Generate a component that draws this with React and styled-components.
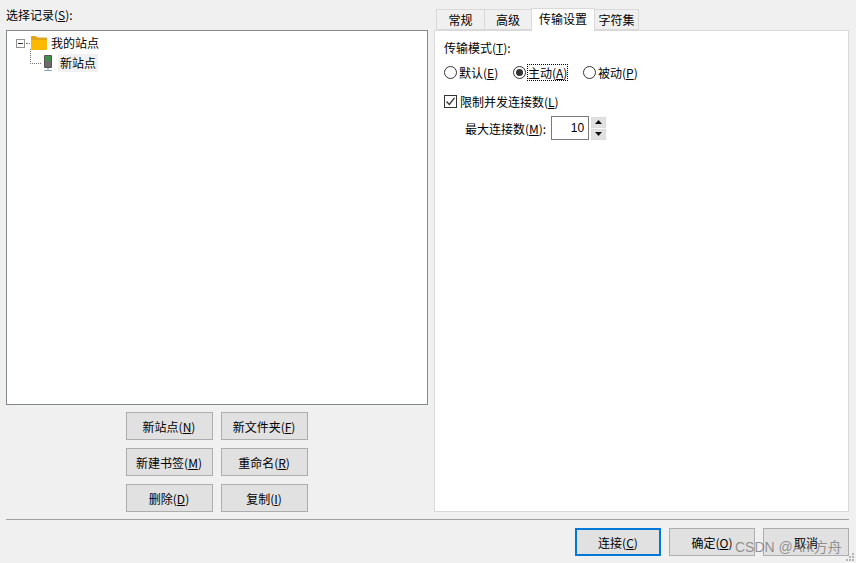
import React from 'react'
import styled, { createGlobalStyle } from 'styled-components'

const Global = createGlobalStyle`
  html, body { margin: 0; padding: 0; background: #f0f0f0; }
  body { font-family: "Noto Sans CJK SC", "Liberation Sans", sans-serif; font-size: 12px; color: #000; }
  u { text-underline-offset: 1px; }
`

const Page = styled.div`
  width: 856px;
  height: 563px;
  position: relative;
  overflow: hidden;
  background: #f0f0f0;
  display: flex;
  flex-direction: column;
  padding: 8px 7px 0 6px;
  box-sizing: border-box;
`
const Main = styled.div`
  display: flex;
  gap: 6px;
  height: 504px;
`
const Left = styled.div`
  width: 422px;
  display: flex;
  flex-direction: column;
`
const Label = styled.div`
  height: 22px;
  line-height: 14px;
`
const Tree = styled.div`
  height: 375px;
  box-sizing: border-box;
  border: 1px solid #828790;
  background: #fff;
  padding: 2px 0 0 9px;
`
const TreeRow = styled.div`
  height: 20px;
  display: flex;
  align-items: center;
  padding-left: ${(p) => p.$indent || 0}px;
`
const Expander = styled.span`
  width: 9px;
  height: 9px;
  box-sizing: border-box;
  border: 1px solid #919191;
  position: relative;
  background: #fff;
  margin-right: 1px;
  &::after {
    content: '';
    position: absolute;
    left: 1px;
    top: 3px;
    width: 5px;
    height: 1px;
    background: #333;
  }
`
const DotLine = styled.span`
  width: ${(p) => p.$w}px;
  border-top: 1px dotted #777;
`
const Elbow = styled.span`
  width: 11px;
  height: 15px;
  margin-top: -13px;
  margin-right: 1px;
  box-sizing: border-box;
  border-left: 1px dotted #777;
  border-bottom: 1px dotted #777;
`
const NodeText = styled.span`
  margin-left: ${(p) => p.$ml}px;
  padding: 0 2px;
  line-height: 18px;
  background: ${(p) => (p.$selected ? '#f1f1f1' : 'transparent')};
`
const BtnGrid = styled.div`
  display: grid;
  grid-template-columns: 87px 87px;
  grid-auto-rows: 28px;
  gap: 8px;
  justify-content: center;
  margin: 7px 0 0 -1px;
`
const Btn = styled.button`
  font: inherit;
  color: #000;
  padding: 0;
  background: #e1e1e1;
  border: 1px solid #adadad;
  box-sizing: border-box;
  white-space: nowrap;
  width: ${(p) => p.$w || 'auto'};
`
const DefaultBtn = styled(Btn)`
  border: 2px solid #0078d7;
`
const Right = styled.div`
  width: 415px;
  display: flex;
  flex-direction: column;
`
const Tabs = styled.div`
  display: flex;
  height: 22px;
  padding-left: 2px;
  align-items: flex-end;
  position: relative;
  z-index: 1;
`
const Tab = styled.div`
  height: ${(p) => (p.$active ? 23 : 21)}px;
  width: ${(p) => p.$w}px;
  box-sizing: border-box;
  text-align: center;
  line-height: 20px;
  border: 1px solid #d9d9d9;
  border-left-width: ${(p) => (p.$active ? 1 : 1)}px;
  margin-right: -1px;
  margin-bottom: ${(p) => (p.$active ? -1 : 0)}px;
  background: ${(p) => (p.$active ? '#fff' : '#f0f0f0')};
  border-bottom: ${(p) => (p.$active ? 'none' : '1px solid #d9d9d9')};
  position: relative;
  z-index: ${(p) => (p.$active ? 2 : 0)};
`
const Panel = styled.div`
  flex: 1;
  background: #fff;
  border: 1px solid #d9d9d9;
  padding: 9px 9px;
  box-sizing: border-box;
  display: flex;
  flex-direction: column;
`
const FieldLabel = styled.div`
  line-height: 16px;
  height: 16px;
`
const RadioRow = styled.div`
  display: flex;
  align-items: center;
  height: 16px;
  margin-top: 8px;
`
const RadioItem = styled.div`
  display: flex;
  align-items: center;
  width: ${(p) => p.$w}px;
`
const RadioCircle = styled.span`
  width: 13px;
  height: 13px;
  box-sizing: border-box;
  border: 1px solid #333;
  border-radius: 50%;
  background: #fff;
  display: inline-flex;
  align-items: center;
  justify-content: center;
  margin-right: 2px;
  &::after {
    content: '';
    width: 7px;
    height: 7px;
    border-radius: 50%;
    background: ${(p) => (p.$on ? '#333' : 'transparent')};
  }
`
const Focus = styled.span`
  outline: 1px dotted #000;
  outline-offset: 0;
  line-height: 15px;
  height: 15px;
`
const CheckRow = styled.div`
  display: flex;
  align-items: center;
  height: 16px;
  margin-top: 13px;
`
const CheckBox = styled.span`
  width: 13px;
  height: 13px;
  box-sizing: border-box;
  border: 1px solid #333;
  background: #fff;
  display: inline-flex;
  margin-right: 3px;
`
const SpinRow = styled.div`
  display: flex;
  align-items: center;
  margin: 7px 0 0 21px;
  height: 24px;
`
const SpinInput = styled.div`
  width: 38px;
  height: 24px;
  margin-left: 5px;
  box-sizing: border-box;
  border: 1px solid #7a7a7a;
  text-align: right;
  line-height: 22px;
  padding-right: 4px;
  font-family: "Liberation Sans", sans-serif;
  font-size: 12px;
`
const SpinBtns = styled.div`
  display: flex;
  flex-direction: column;
  gap: 1px;
  margin-left: 2px;
`
const SpinBtn = styled.div`
  width: 15px;
  height: 11px;
  background: #e1e1e1;
  border: 1px solid #dcdcdc;
  box-sizing: border-box;
  display: flex;
  align-items: center;
  justify-content: center;
`
const Sep = styled.div`
  height: 1px;
  background: #a0a0a0;
  margin-top: 7px;
`
const Footer = styled.div`
  display: flex;
  justify-content: flex-end;
  gap: 8px;
  margin-top: 8px;
  height: 28px;
`
const Watermark = styled.div`
  position: absolute;
  left: 735px;
  top: 538px;
  font-family: "Liberation Sans", "Noto Sans CJK SC", sans-serif;
  font-size: 14px;
  line-height: 18px;
  color: rgba(110, 110, 110, 0.72);
  white-space: nowrap;
`
const Grip = styled.svg`
  position: absolute;
  right: 1px;
  bottom: 1px;
`

function FolderIcon() {
  return (
    <svg width="16" height="14" viewBox="0 0 16 14" style={{ marginLeft: 1 }}>
      <path d="M0 3V1.2C0 .5.5 0 1.2 0h3.6l1.6 1.6h8.4c.6 0 1.2.5 1.2 1.2V5H0z" fill="#e0a51a" />
      <path d="M0 4h16v8.8c0 .7-.5 1.2-1.2 1.2H1.2C.5 14 0 13.500 0 12.800z" fill="#fdb900" />
    </svg>
  )
}

function ServerIcon() {
  return (
    <svg width="12" height="17" viewBox="0 0 12 17">
      <rect x="2" y="0" width="8" height="13" rx="1" fill="#555" />
      <rect x="3" y="1" width="6" height="5" fill="#3f8f4a" />
      <rect x="3" y="6" width="6" height="6" fill="#6b6b6b" />
      <rect x="5.500" y="13" width="1" height="3" fill="#6f8fb0" />
      <rect x="2" y="15" width="8" height="1" fill="#8aa6c2" />
    </svg>
  )
}

function Check() {
  return (
    <svg width="11" height="11" viewBox="0 0 11 11">
      <path d="M1.500 5.500L4.300 8.500L9.500 1.800" fill="none" stroke="#333" strokeWidth="1.300" />
    </svg>
  )
}

function Arrow({ down }) {
  return (
    <svg width="7" height="4" viewBox="0 0 7 4">
      <path d={down ? 'M0 0h7L3.500 4z' : 'M3.500 0L7 4H0z'} fill="#111" />
    </svg>
  )
}

export default function App() {
  return (
    <Page>
      <Global />
      <Main>
        <Left>
          <Label>选择记录(<u>S</u>):</Label>
          <Tree>
            <TreeRow>
              <Expander />
              <DotLine $w={4} />
              <FolderIcon />
              <NodeText $ml={2}>我的站点</NodeText>
            </TreeRow>
            <TreeRow $indent={14}>
              <Elbow />
              <ServerIcon />
              <NodeText $ml={4} $selected>新站点</NodeText>
            </TreeRow>
          </Tree>
          <BtnGrid>
            <Btn>新站点(<u>N</u>)</Btn>
            <Btn>新文件夹(<u>F</u>)</Btn>
            <Btn>新建书签(<u>M</u>)</Btn>
            <Btn>重命名(<u>R</u>)</Btn>
            <Btn>删除(<u>D</u>)</Btn>
            <Btn>复制(<u>I</u>)</Btn>
          </BtnGrid>
        </Left>
        <Right>
          <Tabs>
            <Tab $w={49}>常规</Tab>
            <Tab $w={48}>高级</Tab>
            <Tab $w={64} $active>传输设置</Tab>
            <Tab $w={45}>字符集</Tab>
          </Tabs>
          <Panel>
            <FieldLabel>传输模式(<u>T</u>):</FieldLabel>
            <RadioRow>
              <RadioItem $w={69}><RadioCircle />默认(<u>E</u>)</RadioItem>
              <RadioItem $w={70}><RadioCircle $on /><Focus>主动(<u>A</u>)</Focus></RadioItem>
              <RadioItem $w={70}><RadioCircle />被动(<u>P</u>)</RadioItem>
            </RadioRow>
            <CheckRow>
              <CheckBox><Check /></CheckBox>限制并发连接数(<u>L</u>)
            </CheckRow>
            <SpinRow>
              最大连接数(<u>M</u>):
              <SpinInput>10</SpinInput>
              <SpinBtns>
                <SpinBtn><Arrow /></SpinBtn>
                <SpinBtn><Arrow down /></SpinBtn>
              </SpinBtns>
            </SpinRow>
          </Panel>
        </Right>
      </Main>
      <Sep />
      <Footer>
        <DefaultBtn $w="86px">连接(<u>C</u>)</DefaultBtn>
        <Btn $w="86px">确定(<u>O</u>)</Btn>
        <Btn $w="86px">取消</Btn>
      </Footer>
      <Watermark>CSDN @Ark方舟</Watermark>
      <Grip width="10" height="10" viewBox="0 0 10 10">
        <g fill="#b5b5b5">
          <rect x="7" y="1" width="2" height="2" />
          <rect x="4" y="4" width="2" height="2" />
          <rect x="7" y="4" width="2" height="2" />
          <rect x="1" y="7" width="2" height="2" />
          <rect x="4" y="7" width="2" height="2" />
          <rect x="7" y="7" width="2" height="2" />
        </g>
      </Grip>
    </Page>
  )
}
